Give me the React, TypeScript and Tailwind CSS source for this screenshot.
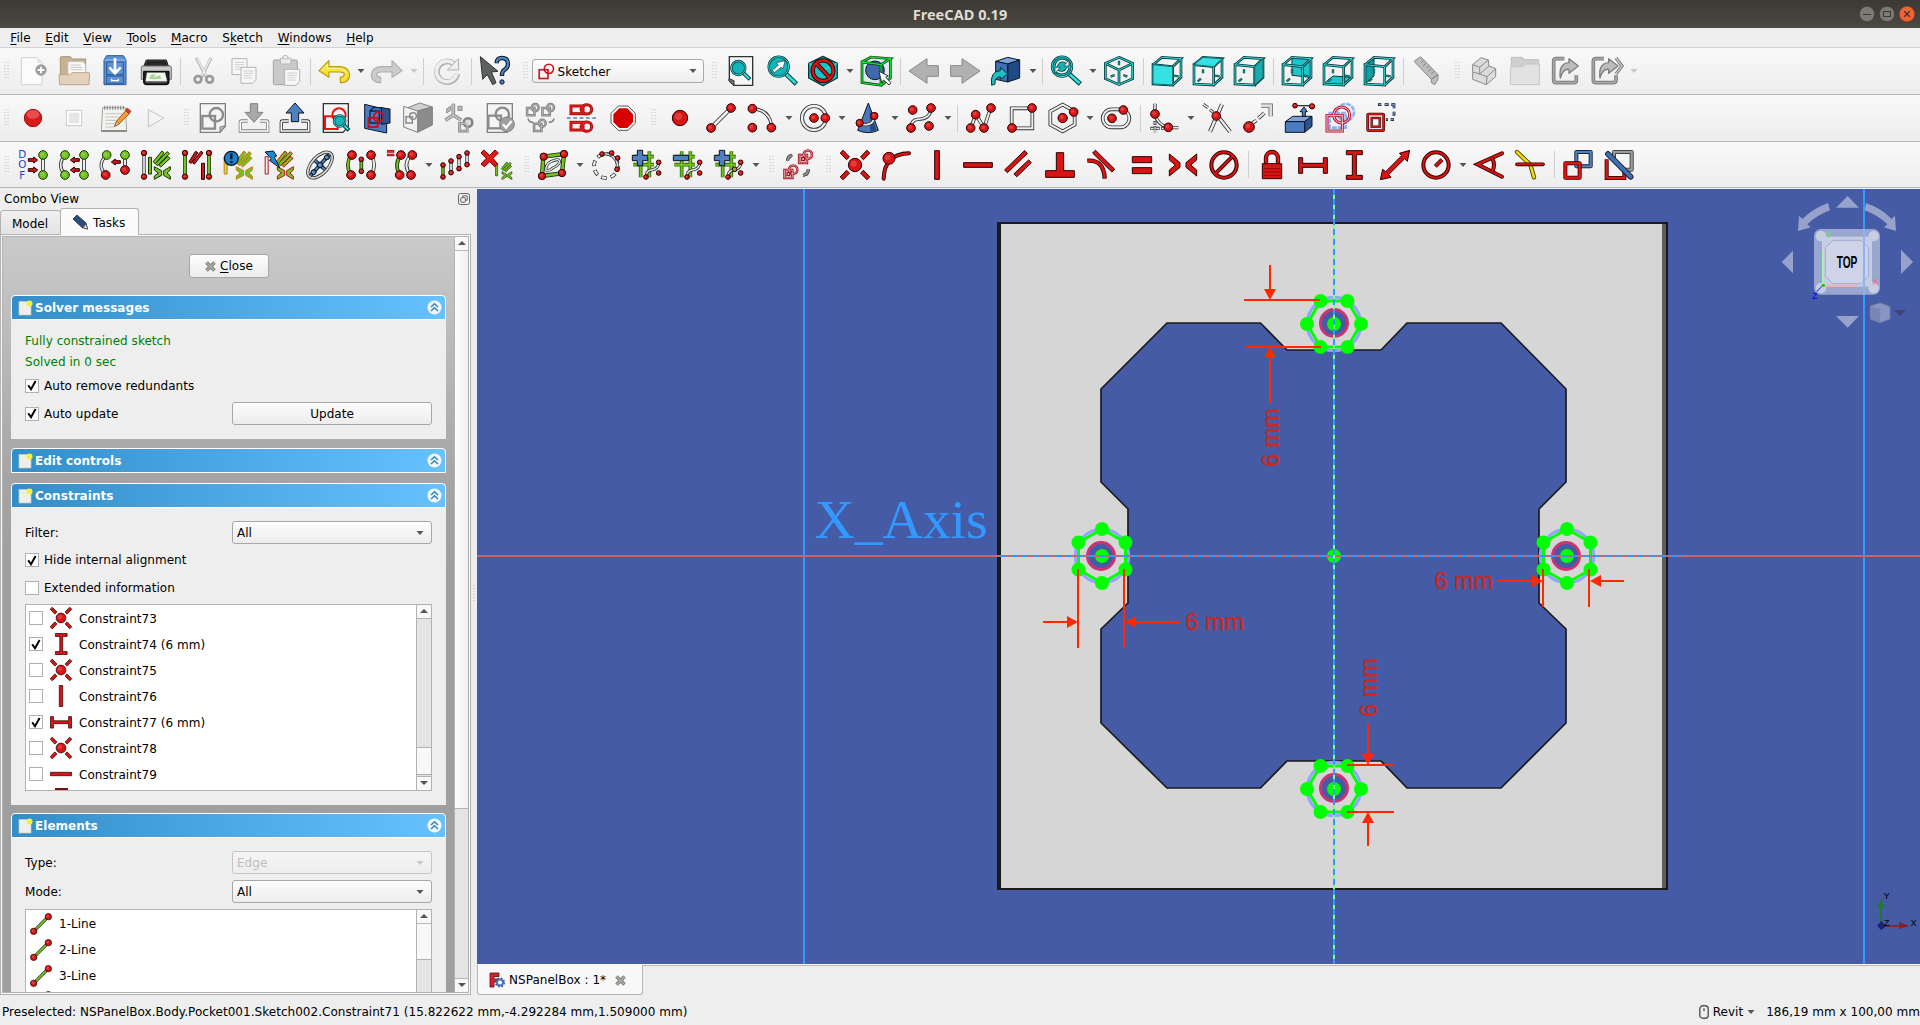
import React from "react";

type Kids = { children?: React.ReactNode };

const R = "#d91414";
const RD = "#2a0000";
const G = "#73c21e";
const GD = "#1b3305";
const W = "#eeeeec";
const K = "#2e3436";
const T = "#34dfe1";
const TD = "#06393b";
const B = "#4f80bf";
const BD = "#0b1521";
const GR = "#a9a9a9";
const GRD = "#808080";

/* ---------- icon primitives (90 x 90 grid) ---------- */

function Icon({ size = 30, children }: Kids & { size?: number }) {
  return (
    <svg width={size} height={size} viewBox="0 0 90 90" fill="none" className="shrink-0 overflow-visible">
      {children}
    </svg>
  );
}

function L({ d, w = 9, c = W, o = K, cap = "butt" }: { d: string; w?: number; c?: string; o?: string; cap?: "butt" | "round" | "square" }) {
  return (
    <>
      <path d={d} stroke={o} strokeWidth={w} strokeLinecap={cap} strokeLinejoin="miter" />
      <path d={d} stroke={c} strokeWidth={w - 5} strokeLinecap={cap} strokeLinejoin="miter" />
    </>
  );
}

/* closed bar with outlined ends */
function Bar({ x1, y1, x2, y2, w = 10, c = R, o = RD }: { x1: number; y1: number; x2: number; y2: number; w?: number; c?: string; o?: string }) {
  const n = Math.hypot(x2 - x1, y2 - y1);
  const px = (-(y2 - y1) / n) * (w / 2);
  const py = ((x2 - x1) / n) * (w / 2);
  return (
    <path
      d={`M${x1 + px} ${y1 + py}L${x2 + px} ${y2 + py}L${x2 - px} ${y2 - py}L${x1 - px} ${y1 - py}Z`}
      fill={c}
      stroke={o}
      strokeWidth={3}
    />
  );
}

function D({ x, y, r = 13, c = R, o = RD }: { x: number; y: number; r?: number; c?: string; o?: string }) {
  return (
    <>
      <circle cx={x} cy={y} r={r} fill={c} stroke={o} strokeWidth={3} />
      <circle cx={x - r * 0.2} cy={y - r * 0.2} r={r * 0.45} fill="#ffffff" opacity={0.18} />
    </>
  );
}

function P({ d, f = R, s = RD, w = 3 }: { d: string; f?: string; s?: string; w?: number }) {
  return <path d={d} fill={f} stroke={s} strokeWidth={w} strokeLinejoin="round" />;
}

/* square overlapped by a circle, the sketch emblem */
function Emblem({ x = 8, y = 10, s = 1, c = R, w = 6 }: { x?: number; y?: number; s?: number; c?: string; w?: number }) {
  return (
    <g transform={`translate(${x} ${y}) scale(${s})`} stroke={c} strokeWidth={w}>
      <rect x={2} y={26} width={38} height={38} />
      <circle cx={44} cy={22} r={20} />
    </g>
  );
}

/* ---------- file toolbar ---------- */

const IcNew = () => (
  <Icon>
    <P d="M10 5H58L72 20V86H10Z" f="#fbfbfb" s="#d2d2d2" />
    <path d="M58 5V20H72Z" fill="#e2e2e2" />
    <circle cx={69} cy={42} r={17} fill="#9d9d9d" />
    <path d="M69 32V52M59 42H79" stroke="#fff" strokeWidth={6} />
  </Icon>
);
const IcOpen = () => (
  <Icon>
    <P d="M4 80V6Q4 2 8 2H34L40 9H80V80Z" f="#c5b295" s="#a8936f" />
    <P d="M27 17H72L79 24V60H27Z" f="#fbfbfb" s="#c4c4c4" />
    <path d="M34 27H66M34 34H70M34 41H70" stroke="#c5c5c5" strokeWidth={3} />
    <P d="M2 86L0 56H32L40 50H90L92 54L90 86Z" f="#e4d1bb" s="#bda589" />
  </Icon>
);
const IcSave = () => (
  <Icon>
    <P d="M12 12L20 -1H70L78 12V86H12Z" f="#5b92d6" s="#2c5795" />
    <path d="M14 12H76" stroke="#8fb8e8" strokeWidth={4} />
    <rect x={20} y={18} width={50} height={38} stroke="#2c5795" strokeWidth={3} />
    <rect x={20} y={60} width={50} height={22} stroke="#2c5795" strokeWidth={3} />
    <path d="M35 68V74H55V68" stroke="#fff" strokeWidth={4} />
    <path d="M45 6V48M28 34L45 52L62 34" stroke="#fff" strokeWidth={8} />
  </Icon>
);
const IcPrint = () => (
  <Icon>
    <P d="M16 12H76L84 36V62H6V36Z" f="#454545" s="#1d1d1d" />
    <P d="M20 18H72L76 30H16Z" f="#2a2a2a" s="#111" />
    <P d="M1 34Q1 30 5 30H87Q91 30 91 34V70H1Z" f="#c9c9c9" s="#6e6e6e" />
    <P d="M8 46H84V78Q84 86 76 86H14Q8 86 8 78Z" f="#1f1f1f" s="#000" />
    <P d="M18 50H72L78 76H14Z" f="#f3f8ee" s="#ddd" w={1} />
    <path d="M30 56L44 54L38 64L56 58L62 68L40 70L24 68Z" fill="#aed49a" />
    <path d="M14 80H76" stroke="#5a5a5a" strokeWidth={3} />
  </Icon>
);
const IcCut = () => (
  <Icon>
    <path d="M22 6L54 66M66 6L36 66" stroke="#b5b5b5" strokeWidth={9} />
    <path d="M24 8L52 60M64 8L38 60" stroke="#f0f0f0" strokeWidth={4} />
    <circle cx={27} cy={70} r={10} stroke="#9a9a9a" strokeWidth={8} />
    <circle cx={62} cy={70} r={10} stroke="#9a9a9a" strokeWidth={8} />
  </Icon>
);
const Sheet = ({ x, y }: { x: number; y: number }) => (
  <g transform={`translate(${x} ${y})`}>
    <path d="M0 0H45V36L34 48H0Z" fill="#f7f7f7" stroke="#b5b5b5" strokeWidth={3} />
    <path d="M8 11H37M8 18H37M8 25H32M8 32H34" stroke="#cfcfcf" strokeWidth={3} />
  </g>
);
const IcCopy = () => (
  <Icon>
    <Sheet x={6} y={8} />
    <Sheet x={33} y={34} />
  </Icon>
);
const IcPaste = () => (
  <Icon>
    <rect x={7} y={12} width={72} height={74} rx={4} fill="#c9c9c9" stroke="#a3a3a3" strokeWidth={3} />
    <rect x={28} y={6} width={32} height={18} rx={3} fill="#ececec" stroke="#b5b5b5" strokeWidth={3} />
    <rect x={36} y={-1} width={14} height={10} rx={3} fill="#f3f3f3" stroke="#b5b5b5" strokeWidth={3} />
    <Sheet x={41} y={40} />
  </Icon>
);
const ArrowBack = ({ c, o }: { c: string; o: string }) => (
  <P d="M0 44L30 14V32H62Q92 34 92 58Q90 80 64 80V64Q76 62 76 54Q74 48 62 48H30V64Z" f={c} s={o} w={3.5} />
);
const IcUndo = () => (
  <Icon>
    <ArrowBack c="#f6e13c" o="#b99a08" />
    <path d="M8 42L26 24V38H62Q78 39 84 52" stroke="#fdf6b0" strokeWidth={3} />
  </Icon>
);
const IcRedo = () => (
  <Icon>
    <g transform="translate(90 0) scale(-1 1)">
      <ArrowBack c="#cccccc" o="#b0b0b0" />
    </g>
  </Icon>
);
const IcRefresh = () => (
  <Icon>
    <path d="M76 54A31 31 0 1 1 66 24" stroke="#b0b0b0" strokeWidth={17} />
    <path d="M74 55A31 31 0 1 1 66 24" stroke="#eeeeee" strokeWidth={11} />
    <P d="M80 8V42H46L58 30Q68 18 80 8Z" f="#eeeeee" s="#b0b0b0" />
  </Icon>
);
const IcWhat = () => (
  <Icon>
    <P d="M1 2L54 46L34 48L48 80L38 86L22 56L8 70Z" f="#5e625f" s="#2f3231" />
    <path d="M50 22Q50 6 66 6Q84 6 84 24Q84 36 70 44Q66 48 66 60" stroke={BD} strokeWidth={13} />
    <path d="M50 20Q51 6 66 6Q84 6 84 24Q84 36 70 44Q66 48 66 58" stroke={B} strokeWidth={7} />
    <circle cx={66} cy={78} r={6.5} fill={B} stroke={BD} strokeWidth={3} />
  </Icon>
);

/* ---------- view toolbar ---------- */

const Lens = ({ x = 36, y = 34, r = 28, hx = 88, hy = 84, w = 14 }: { x?: number; y?: number; r?: number; hx?: number; hy?: number; w?: number }) => (
  <>
    <path d={`M${x + r * 0.7} ${y + r * 0.7}L${hx} ${hy}`} stroke={TD} strokeWidth={w} />
    <path d={`M${x + r * 0.7} ${y + r * 0.7}L${hx - 2} ${hy - 2}`} stroke={T} strokeWidth={w - 6} />
    <circle cx={x} cy={y} r={r} fill="#12b5b9" stroke={TD} strokeWidth={7} />
    <circle cx={x} cy={y} r={r} stroke={T} strokeWidth={3} />
  </>
);
const IcFit = () => (
  <Icon>
    <path d="M10 2H80V88H24L10 74Z" fill="#f6f6f4" stroke={K} strokeWidth={4} />
    <P d="M9 68L24 74V90L9 74Z" f="#6d706c" s={K} />
    <Lens x={37} y={36} r={21} hx={72} hy={70} w={12} />
  </Icon>
);
const IcFitSel = () => (
  <Icon>
    <Lens x={35} y={32} r={30} />
    <P d="M22 50L16 42L34 28L28 20L54 14L48 38L42 34Z" f="#fff" s={K} w={2} />
  </Icon>
);
const IcStyle = () => (
  <Icon>
    <P d="M45 1L88 22V66L45 89L2 66V22Z" f="#14c3c6" s={TD} w={4} />
    <path d="M2 22L45 42L88 22" stroke={T} strokeWidth={3} />
    <circle cx={45} cy={44} r={31} stroke={RD} strokeWidth={13} />
    <path d="M24 22L66 66" stroke={RD} strokeWidth={13} />
    <circle cx={45} cy={44} r={31} stroke={R} strokeWidth={7} />
    <path d="M23 21L67 67" stroke={R} strokeWidth={7} />
  </Icon>
);
const IcBBox = () => (
  <Icon>
    <path d="M3 20L30 3H86V60L62 86L4 82Z" fill="#c8d3e6" opacity={0.4} />
    <circle cx={42} cy={43} r={28} fill="#4069ad" stroke={BD} strokeWidth={3} />
    <path d="M3 18L60 26V88L3 80ZM3 18L30 3L88 8L60 26M88 8V66L60 88" stroke="#04300a" strokeWidth={8} />
    <path d="M3 18L60 26V88L3 80ZM3 18L30 3L88 8L60 26M88 8V66L60 88" stroke="#10e22c" strokeWidth={4} />
    <P d="M54 46L82 60L74 64L90 80L84 87L68 72L62 80Z" f="#fff" s={K} />
  </Icon>
);
const IcBack = () => (
  <Icon>
    <P d="M0 45L54 8V29H88V61H54V82Z" f="#b1b1b1" s="#888" />
  </Icon>
);
const IcFwd = () => (
  <Icon>
    <P d="M90 45L36 8V29H2V61H36V82Z" f="#b1b1b1" s="#888" />
  </Icon>
);
const IcLink = () => (
  <Icon>
    <P d="M14 16L50 4L86 12L50 24Z" f="#7ba3da" s={BD} />
    <P d="M50 24L86 12V66L50 78Z" f="#214a85" s={BD} />
    <P d="M14 16L50 24V78L14 70Z" f="#3f6fb4" s={BD} />
    <P d="M2 88Q-4 46 28 44V34L50 54L28 70V62Q10 64 12 84Z" f="#1fc1c4" s={TD} />
  </Icon>
);
const IcSync = () => (
  <Icon>
    <Lens x={33} y={32} r={30} />
    <path d="M16 30Q20 14 34 14Q44 14 50 22M50 36Q46 50 32 50Q22 50 16 42" stroke={TD} strokeWidth={10} />
    <path d="M16 30Q20 14 34 14Q44 14 50 22M50 36Q46 50 32 50Q22 50 16 42" stroke={W} strokeWidth={5} />
    <P d="M54 12V30H38ZM12 52V34H28Z" f={W} s={TD} w={2} />
  </Icon>
);
const IcIso = () => (
  <Icon>
    <L d="M45 4L86 22V68L45 86L4 68V22ZM4 22L45 42L86 22M45 42V86" c={T} o={TD} w={8} />
    <L d="M45 14V28M20 62L32 57M70 62L58 57" c={T} o={TD} w={7} />
  </Icon>
);
type Face = "front" | "top" | "right" | "rear" | "bottom" | "left";
const facePath: Record<Face, string> = {
  front: "M3 26L62 32V87L3 84Z",
  top: "M3 26L30 4L87 8L62 32Z",
  right: "M62 32L87 8V64L62 87Z",
  rear: "M30 4L87 8V64L30 58Z",
  bottom: "M3 84L30 60L87 64L62 87Z",
  left: "M3 26L30 4V60L3 84Z",
};
const IcCube = ({ face }: { face: Face }) => (
  <Icon>
    {(face === "rear" || face === "bottom" || face === "left") && <path d={facePath[face]} fill={face === "left" ? "#0f9ea1" : "#1fc5c8"} stroke={TD} strokeWidth={3} />}
    <L d="M14 76L24 68M30 40V52M66 59L80 61" c={T} o={TD} w={7} />
    <L d="M3 26L62 32V87L3 84ZM3 26L30 4L87 8L62 32M87 8V64L62 87" c={T} o={TD} w={8} />
    {(face === "front" || face === "top" || face === "right") && <path d={facePath[face]} fill={face === "right" ? "#1aadb0" : "#34e0e2"} stroke={TD} strokeWidth={2} />}
  </Icon>
);
const IcRuler = () => (
  <Icon>
    <P d="M6 16L26 2L78 56V70L68 86L58 80L58 70Z" f="#bdbdbd" s="#8a8a8a" />
    <path d="M58 70L78 56M34 14L28 20M42 22L33 30M50 30L44 36M58 38L49 46M66 46L58 54" stroke="#777" strokeWidth={3} />
  </Icon>
);
const IcPart = () => (
  <Icon>
    <P d="M11 26L36 5L58 12L60 30L80 38V62L52 86L11 70Z" f="#dcdcdc" s="#8b8b8b" />
    <path d="M11 26L32 34L58 12M32 34V54L60 30M32 54L11 48M32 54L54 62L80 38M54 62L52 86" stroke="#8b8b8b" strokeWidth={3} />
  </Icon>
);
const IcFolder = () => (
  <Icon>
    <P d="M4 84V4H36L44 11H86V84Z" f="#cfcfcf" s="#bdbdbd" />
    <P d="M1 86V32H38L46 24H88V86Z" f="#e2e2e2" s="#c6c6c6" />
  </Icon>
);
const ExportBody = () => (
  <>
    <path d="M40 8H16Q8 8 8 16V72Q8 80 16 80H68Q76 80 76 72V58" stroke="#7e7e7e" strokeWidth={11} />
    <path d="M40 8H16Q8 8 8 16V72Q8 80 16 80H68Q76 80 76 72V58" stroke="#a8a8a8" strokeWidth={5} />
    <P d="M28 66Q22 22 54 20V8L82 30L54 52V40Q36 38 28 66Z" f="#bcbcbc" s="#7e7e7e" w={4} />
  </>
);
const IcExport = () => (
  <Icon>
    <ExportBody />
  </Icon>
);
const IcExportAll = () => (
  <Icon>
    <g transform="translate(-4 0)">
      <ExportBody />
    </g>
    <path d="M72 6L90 30L72 54" stroke="#7e7e7e" strokeWidth={10} />
    <path d="M72 6L90 30L72 54" stroke="#c4c4c4" strokeWidth={4} />
  </Icon>
);

/* ---------- macro and sketch toolbar ---------- */

const IcRecord = () => (
  <Icon>
    <circle cx={45} cy={45} r={26} fill="#d81b1b" stroke="#9c0f0f" strokeWidth={3} />
    <ellipse cx={45} cy={34} rx={19} ry={13} fill="#ff8a8a" opacity={0.45} />
  </Icon>
);
const IcStopSq = () => (
  <Icon>
    <rect x={22} y={22} width={46} height={46} fill="#fff" stroke="#c9c9c9" strokeWidth={3} />
    <rect x={29} y={29} width={32} height={32} fill="#e6e6e6" />
  </Icon>
);
const IcNote = () => (
  <Icon>
    <P d="M8 14H76L80 84H4Z" f="#f2f2ef" s="#a5a5a0" />
    <path d="M4 84H80" stroke="#6d6d68" strokeWidth={4} />
    <path d="M14 8V20M22 8V20M30 8V20M38 8V20M46 8V20M54 8V20M62 8V20M70 8V20" stroke="#8a8a8a" strokeWidth={3.5} />
    <path d="M16 32H66M16 42H58M16 52H52M16 62H46M16 72H42" stroke="#c4c4c4" strokeWidth={3} />
    <P d="M44 70L50 54L78 22L88 32L58 62Z" f="#f39c3d" s="#a85c10" />
    <P d="M76 22L82 15L93 25L87 32Z" f="#dc3a2b" s="#96190f" w={2} />
    <P d="M44 70L50 55L58 63Z" f="#e9cfa6" s="#6e4a1a" w={2} />
  </Icon>
);
const IcPlay = () => (
  <Icon>
    <P d="M22 20L68 45L22 72Z" f="#f4f4f4" s="#c3c3c3" />
  </Icon>
);
const Page = ({ c = GRD }: { c?: string }) => <path d="M7 2H82V70L66 88H7Z" fill="#f4f4f4" stroke={c} strokeWidth={4} />;
const IcNewSk = () => (
  <Icon>
    <Page />
    <Emblem x={11} y={13} c="#8b8b8b" w={7} />
    <P d="M82 68L66 72V88Z" f="#bbb" s={GRD} />
  </Icon>
);
const Tray = ({ c }: { c: string }) => (
  <>
    <path d="M26 54H8Q4 54 4 58V84H86V58Q86 54 82 54H64" stroke={c} strokeWidth={10} />
    <path d="M26 54H8Q4 54 4 58V84H86V58Q86 54 82 54H64" stroke="#fff" strokeWidth={5} />
  </>
);
const IcLeave = () => (
  <Icon>
    <Tray c={GRD} />
    <P d="M34 2H56V28H72L45 58L18 28H34Z" f={GR} s={GRD} />
  </Icon>
);
const IcUp = () => (
  <Icon>
    <Tray c={K} />
    <P d="M34 56H56V30H72L45 0L18 30H34Z" f={B} s={BD} />
  </Icon>
);
const IcViewSk = () => (
  <Icon>
    <Page c={K} />
    <Emblem x={10} y={14} c="#ee1111" w={6} />
    <Lens x={56} y={54} r={17} hx={84} hy={82} w={12} />
  </Icon>
);
const IcSection = () => (
  <Icon>
    <P d="M8 4L74 20V90L8 76Z" f="#4b7cc0" s={BD} />
    <P d="M58 14L84 18V60L58 64Z" f="#2b538f" s={BD} />
    <path d="M24 24H52V60H24ZM24 24L34 14H62" stroke="#0e2445" strokeWidth={4} />
    <Emblem x={18} y={26} s={0.72} c="#c90f1c" w={8} />
  </Icon>
);
const IcMap = () => (
  <Icon>
    <P d="M4 18L50 0L88 12L44 24Z" f="#d0d0d0" s={GRD} />
    <P d="M44 24L88 12V66L44 88Z" f="#8c8c8c" s={GRD} />
    <P d="M2 10L44 24V88L2 72Z" f="#f1f1f1" s={GRD} />
    <Emblem x={8} y={28} s={0.5} c="#8b8b8b" w={9} />
  </Icon>
);
const IcReorient = () => (
  <Icon>
    <L d="M28 2V36L4 52M28 36L52 52" w={11} c="#c0c0c0" o="#858585" />
    <rect x={42} y={10} width={12} height={12} fill="#bdbdbd" stroke="#8d8d8d" strokeWidth={3} />
    <path d="M8 18L20 10V22L8 30Z" fill="#bdbdbd" stroke="#8d8d8d" strokeWidth={3} />
    <g transform="translate(44 42) scale(0.64)">
      <path d="M4 30H40V66H4Z" stroke="#858585" strokeWidth={13} />
      <circle cx={44} cy={26} r={20} fill="#dcdcdc" stroke="#858585" strokeWidth={12} />
      <path d="M4 30H40V66H4Z" stroke="#c0c0c0" strokeWidth={5} />
    </g>
  </Icon>
);
const IcValidate = () => (
  <Icon>
    <Page />
    <Emblem x={8} y={12} c="#8b8b8b" w={7} />
    <circle cx={66} cy={64} r={22} fill="#a0a0a0" stroke={GRD} strokeWidth={3} />
    <path d="M54 64L63 74L80 54" stroke="#fff" strokeWidth={7} />
  </Icon>
);
const MiniEmblem = ({ x, y }: { x: number; y: number }) => (
  <g transform={`translate(${x} ${y}) scale(0.58)`}>
    <g stroke="#808080" strokeWidth={13}>
      <path d="M4 24H42V62H4Z" />
      <circle cx={46} cy={22} r={18} />
    </g>
    <g stroke="#b8b8b8" strokeWidth={4}>
      <path d="M4 24H42V62H4Z" />
      <circle cx={46} cy={22} r={18} />
    </g>
  </g>
);
const IcMerge = () => (
  <Icon>
    <MiniEmblem x={1} y={1} />
    <MiniEmblem x={47} y={1} />
    <MiniEmblem x={22} y={48} />
    <path d="M6 46Q8 58 22 58M84 46Q82 58 68 58" stroke="#8a8a8a" strokeWidth={5} />
  </Icon>
);
const IcMirror = () => (
  <Icon>
    {["translate(0 0)", "translate(0 90) scale(1 -1)"].map((t) => (
      <g key={t} transform={t}>
        <g stroke="#a50808" strokeWidth={9}>
          <rect x={12} y={9} width={36} height={23} />
          <path d="M60 5A14 14 0 0 1 60 33Q46 33 42 19Q46 5 60 5Z" />
        </g>
        <g stroke="#ea1c1c" strokeWidth={4}>
          <rect x={12} y={9} width={36} height={23} />
          <path d="M60 5A14 14 0 0 1 60 33Q46 33 42 19Q46 5 60 5Z" />
        </g>
      </g>
    ))}
    <path d="M0 45H90" stroke={B} strokeWidth={5} strokeDasharray="11 8" />
  </Icon>
);
const IcStop = () => (
  <Icon>
    <P d="M31 9H60L82 31V60L60 82H31L9 60V31Z" f="#fdfdfd" s="#555" w={3} />
    <path d="M34 16H58L75 34V58L58 75H34L16 58V34Z" fill="#d60000" />
  </Icon>
);

const IcPoint = () => (
  <Icon>
    <D x={45} y={45} r={23} />
  </Icon>
);
const IcLine = ({ c = W, size = 30 }: { c?: string; size?: number }) => (
  <Icon size={size}>
    <L d="M15 75L75 15" w={13} c={c} />
    <D x={15} y={75} />
    <D x={75} y={15} />
  </Icon>
);
const IcArc = () => (
  <Icon>
    <L d="M18 18Q68 20 74 70" w={10} />
    <D x={16} y={17} />
    <D x={16} y={74} />
    <D x={73} y={74} />
  </Icon>
);
const IcCircle = () => (
  <Icon>
    <circle cx={42} cy={45} r={36} stroke={K} strokeWidth={12} />
    <circle cx={42} cy={45} r={36} stroke={W} strokeWidth={7} />
    <D x={42} y={45} />
    <D x={76} y={45} />
  </Icon>
);
const IcConic = () => (
  <Icon>
    <P d="M46 0L76 82Q46 96 14 82Z" f="#4878ba" s={BD} />
    <path d="M50 20L70 80Q60 86 52 86Z" fill="#274b83" />
    <L d="M20 62Q60 74 64 40" w={10} />
    <D x={20} y={60} r={11} />
    <D x={64} y={39} r={11} />
  </Icon>
);
const IcSpline = () => (
  <Icon>
    <L d="M15 75Q14 52 34 49Q74 48 75 16" w={10} />
    <D x={20} y={21} />
    <D x={75} y={15} />
    <D x={15} y={75} />
    <D x={69} y={69} />
  </Icon>
);
const IcPoly = () => (
  <Icon>
    <L d="M14 75L30 35L54 75L74 15" w={11} />
    <D x={14} y={75} />
    <D x={29} y={35} />
    <D x={54} y={75} />
    <D x={75} y={15} />
  </Icon>
);
const IcRect = () => (
  <Icon>
    <L d="M14 16H76V76H14Z" w={11} />
    <D x={75} y={15} />
    <D x={15} y={75} />
  </Icon>
);
const IcHex = () => (
  <Icon>
    <L d="M44 5L80 25V65L44 85L7 65V25Z" w={11} />
    <D x={44} y={45} r={14} />
    <D x={77} y={27} />
  </Icon>
);
const IcSlot = () => (
  <Icon>
    <rect x={5} y={19} width={80} height={54} rx={27} stroke={K} strokeWidth={11} />
    <rect x={5} y={19} width={80} height={54} rx={27} stroke={W} strokeWidth={6} />
    <D x={33} y={46} />
    <D x={67} y={21} />
  </Icon>
);
const IcFillet = () => (
  <Icon>
    <L d="M18 2V32Q24 66 60 74H88" w={10} />
    <path d="M18 54V88M4 76H44" stroke={K} strokeWidth={9} strokeDasharray="12 4" />
    <path d="M18 56V88M6 76H44" stroke={W} strokeWidth={4} strokeDasharray="8 8" />
    <D x={18} y={33} />
    <D x={58} y={73} />
  </Icon>
);
const IcTrim = () => (
  <Icon>
    <L d="M60 4L24 86" w={12} />
    <L d="M48 40L84 86" w={12} />
    <L d="M4 4L18 14M24 20L34 28" w={9} />
    <D x={43} y={39} />
  </Icon>
);
const IcExtend = () => (
  <Icon>
    <L d="M22 66L40 52M46 46L64 30" w={11} />
    <L d="M54 8H83V40" w={13} c="#dcdcdc" o="#666" />
    <D x={18} y={72} r={16} />
  </Icon>
);
const IcExternal = () => (
  <Icon>
    <P d="M4 56L26 40H84L62 56Z" f="#7ba3da" s={BD} />
    <P d="M62 56L84 40V70L62 88Z" f="#2b538f" s={BD} />
    <P d="M4 56H62V88H4Z" f="#4b7cc0" s={BD} />
    <path d="M34 8H84" stroke={K} strokeWidth={4} />
    <P d="M55 40V26H48L60 12L70 26H64V40Z" f={B} s={BD} />
    <D x={33} y={8} r={7} />
    <D x={84} y={10} r={8} />
  </Icon>
);
const IcCarbon = () => (
  <Icon>
    <g stroke="#7fa6f2" strokeWidth={8} opacity={0.85}>
      <rect x={14} y={30} width={48} height={44} strokeDasharray="14 3" />
      <circle cx={62} cy={28} r={25} strokeDasharray="14 3" />
    </g>
    <g stroke="#b8152a" strokeWidth={9}>
      <rect x={6} y={38} width={46} height={46} />
      <circle cx={50} cy={36} r={24} />
    </g>
    <g stroke="#f3d3dc" strokeWidth={3}>
      <rect x={6} y={38} width={46} height={46} />
      <circle cx={50} cy={36} r={24} />
    </g>
  </Icon>
);
const IcConstr = () => (
  <Icon>
    <path d="M36 5H46M56 5H68M76 5H84V16M84 26V38M84 50H74M66 50H60" stroke={BD} strokeWidth={8} />
    <path d="M38 5H45M57 5H67M77 5H84V15M84 27V37M83 50H75M65 50H61" stroke="#6d9bd6" strokeWidth={4} />
    <rect x={5} y={33} width={48} height={50} rx={3} fill="#f4e4e2" stroke={RD} strokeWidth={8} />
    <rect x={5} y={33} width={48} height={50} rx={3} stroke="#ee1515" strokeWidth={5} />
    <rect x={17} y={45} width={24} height={26} fill="#fff" stroke={RD} strokeWidth={7} />
    <rect x={17} y={45} width={24} height={26} stroke="#ee1515" strokeWidth={4} />
  </Icon>
);

/* ---------- sketch helper toolbar ---------- */

const ArrL = ({ x, y }: { x: number; y: number }) => <P d={`M${x} ${y}L${x + 12} ${y - 9}V${y - 4}H${x + 27}V${y + 4}H${x + 12}V${y + 9}Z`} />;
const ArrR = ({ x, y }: { x: number; y: number }) => <P d={`M${x + 28} ${y}L${x + 16} ${y - 9}V${y - 4}H${x}V${y + 4}H${x + 16}V${y + 9}Z`} />;
const IcDof = () => (
  <Icon>
    <g fill="#2c3fb8" fontFamily="DejaVu Sans" fontSize={31}>
      <text x={1} y={24}>D</text>
      <text x={1} y={55}>O</text>
      <text x={4} y={88}>F</text>
    </g>
    <L d="M75 25V65" w={12} />
    <D x={75} y={15} c={G} o={GD} />
    <D x={75} y={75} c={G} o={GD} />
    <ArrR x={31} y={30} />
    <ArrR x={31} y={60} />
  </Icon>
);
const IcConn = () => (
  <Icon>
    <L d="M18 15Q-8 45 18 75" w={10} />
    <L d="M75 25V65" w={12} />
    <D x={18} y={15} c={G} o={GD} />
    <D x={75} y={15} c={G} o={GD} />
    <D x={18} y={75} c={G} o={GD} />
    <D x={75} y={75} c={G} o={GD} />
    <ArrL x={34} y={30} />
    <ArrL x={34} y={60} />
  </Icon>
);
const IcOrig = () => (
  <Icon>
    <L d="M20 15Q-12 45 18 75" w={10} />
    <L d="M75 20V55" w={12} />
    <D x={20} y={15} c={G} o={GD} />
    <D x={75} y={15} c={G} o={GD} />
    <D x={75} y={60} />
    <D x={17} y={75} />
    <ArrL x={34} y={36} />
  </Icon>
);
const Hatch = ({ c, o }: { c: string; o: string }) => (
  <>
    <Bar x1={40} y1={38} x2={66} y2={6} w={9} c={c} o={o} />
    <Bar x1={46} y1={44} x2={82} y2={8} w={9} c={c} o={o} />
    <Bar x1={56} y1={48} x2={84} y2={22} w={9} c={c} o={o} />
  </>
);
const Chev = ({ c, o }: { c: string; o: string }) => (
  <>
    <P d="M40 50L62 62V76L40 88V78L52 69L40 60Z" f={c} s={o} />
    <P d="M88 50L68 62V76L88 88V78L78 69L88 60Z" f={c} s={o} />
  </>
);
const IcSelCon = () => (
  <Icon>
    <L d="M9 10V80" w={10} />
    <Bar x1={27} y1={22} x2={27} y2={72} w={9} c={G} o={GD} />
    <Hatch c={G} o={GD} />
    <Chev c={G} o={GD} />
    <D x={9} y={9} r={8} />
    <D x={9} y={80} r={8} />
  </Icon>
);
const IcSelElem = () => (
  <Icon>
    <L d="M9 10V80" w={11} c={G} o={GD} />
    <L d="M81 10V80" w={11} c={G} o={GD} />
    <Bar x1={24} y1={38} x2={44} y2={6} w={8} />
    <Bar x1={34} y1={40} x2={60} y2={6} w={8} />
    <Bar x1={63} y1={40} x2={63} y2={88} w={9} />
    <D x={9} y={9} r={8} />
    <D x={9} y={80} r={8} />
    <D x={81} y={9} r={8} />
    <D x={81} y={80} r={8} />
  </Icon>
);
const IcRedund = () => (
  <Icon>
    <Bar x1={8} y1={20} x2={8} y2={72} w={9} c="#c8d94a" o="#d2791a" />
    <Hatch c={G} o="#d2791a" />
    <Chev c={G} o="#d2791a" />
    <circle cx={25} cy={25} r={21} fill="#1d7fd0" stroke={BD} strokeWidth={4} />
    <path d="M25 10V28M25 33V40" stroke={BD} strokeWidth={7} />
  </Icon>
);
const IcConflict = () => (
  <Icon>
    <Bar x1={8} y1={20} x2={8} y2={72} w={9} c={W} o="#b01717" />
    <Hatch c={G} o="#b01717" />
    <Chev c={G} o="#b01717" />
    <P d="M3 6L28 3L38 18L31 22L48 54L16 31L22 26Z" f="#1d87da" s={BD} />
  </Icon>
);
const IcInternal = () => (
  <Icon>
    <g transform="rotate(-48 45 45)">
      <ellipse cx={45} cy={45} rx={47} ry={25} stroke={K} strokeWidth={10} />
      <ellipse cx={45} cy={45} rx={47} ry={25} stroke="#d8d8d4" strokeWidth={5} />
      <L d="M2 45H88M45 24V66" c={B} o={BD} w={11} />
      <D x={16} y={45} r={7} c={B} o={BD} />
      <D x={45} y={45} r={8} c={B} o={BD} />
      <D x={76} y={45} r={7} c={B} o={BD} />
    </g>
  </Icon>
);
const IcSymm = () => (
  <Icon>
    <L d="M15 15Q-4 45 15 75" w={11} c={G} o={GD} />
    <L d="M75 15Q94 45 75 75" w={11} />
    <L d="M46 30V62" w={11} c={G} o={GD} />
    <D x={18} y={15} />
    <D x={75} y={15} />
    <D x={15} y={75} />
    <D x={75} y={75} />
    <D x={46} y={28} r={7} />
    <D x={46} y={64} r={7} />
  </Icon>
);
const IcClone = () => (
  <Icon>
    <path d="M0 4H22M0 15H22" stroke="#9d0b0b" strokeWidth={8} />
    <path d="M2 4H20M2 15H20" stroke="#ef3a3a" strokeWidth={3} />
    <L d="M42 15Q20 42 38 75" w={11} c={G} o={GD} />
    <L d="M72 15Q46 44 70 75" w={11} />
    <D x={42} y={15} />
    <D x={76} y={15} />
    <D x={38} y={75} />
    <D x={72} y={75} />
  </Icon>
);
const IcArray = () => (
  <Icon>
    <L d="M9 45V80" w={10} c={G} o={GD} />
    <L d="M33 34V68" w={10} />
    <L d="M57 20V56" w={10} />
    <L d="M81 10V42" w={10} />
    <D x={9} y={45} r={7} />
    <D x={9} y={81} r={7} />
    <D x={33} y={33} r={7} />
    <D x={33} y={68} r={7} />
    <D x={57} y={20} r={7} />
    <D x={57} y={56} r={7} />
    <D x={81} y={9} r={7} />
    <D x={81} y={44} r={7} />
  </Icon>
);
const IcDelAll = () => (
  <Icon>
    <g transform="translate(38 34) scale(0.62)">
      <Bar x1={14} y1={12} x2={14} y2={70} w={10} c={G} o={GD} />
      <Hatch c={G} o={GD} />
      <Chev c={G} o={GD} />
    </g>
    <P d="M8 0L26 16L42 0L52 9L36 25L50 42L41 50L26 35L10 50L0 42L16 25L0 9Z" f="#e01b1b" s="#7a0000" />
  </Icon>
);
const IcBsCtl = () => (
  <Icon>
    <L d="M16 20L78 12L72 70L12 78Z" w={13} c={G} o={GD} />
    <L d="M24 62Q20 46 40 34Q64 24 64 34Q66 44 44 54Q34 64 24 62" w={9} />
    <D x={17} y={20} r={11} />
    <D x={78} y={12} r={11} />
    <D x={12} y={78} r={11} />
    <D x={72} y={69} r={11} />
  </Icon>
);
const IcBsDeg = () => (
  <Icon>
    <ellipse cx={45} cy={48} rx={36} ry={36} stroke={K} strokeWidth={11} strokeDasharray="17 12" strokeDashoffset={4} />
    <ellipse cx={45} cy={48} rx={36} ry={36} stroke="#fff" strokeWidth={6} strokeDasharray="13 16" strokeDashoffset={2} />
    <L d="M34 13Q60 6 76 32Q82 44 76 58" w={9} />
    <D x={33} y={12} r={7} />
    <D x={62} y={9} r={7} />
    <D x={80} y={24} r={7} />
    <D x={78} y={58} r={7} />
  </Icon>
);
const IcGrid = ({ sign, knot }: { sign: "+" | "-"; knot?: boolean }) => (
  <Icon>
    <L d="M26 4V82M52 4V82M4 20H66M4 44H66" w={11} c={G} o="#2f6608" />
    <L d="M42 80Q42 62 58 60Q80 56 80 38" w={9} />
    <D x={42} y={81} r={7} />
    <D x={80} y={37} r={7} />
    <D x={80} y={69} r={7} />
    {knot && <D x={62} y={58} r={7} c="#9b9a12" />}
    {sign === "+" ? <P d="M16 1H32V16H47V32H32V47H16V32H1V16H16Z" f={B} s={BD} /> : <P d="M1 16H47V32H1Z" f={B} s={BD} />}
  </Icon>
);
const SpaceEmblem = ({ x, y }: { x: number; y: number }) => (
  <g transform={`translate(${x} ${y}) scale(0.62)`}>
    <g stroke="#a80d1a" strokeWidth={12}>
      <path d="M4 26H42V64H4Z" />
      <circle cx={46} cy={24} r={20} />
    </g>
    <g stroke="#f6e4e6" strokeWidth={3}>
      <path d="M4 26H42V64H4Z" />
      <circle cx={46} cy={24} r={20} />
    </g>
    <path d="M16 38H30V52H16Z" stroke="#a80d1a" strokeWidth={6} />
  </g>
);
const IcVirt = () => (
  <Icon>
    <SpaceEmblem x={46} y={-1} />
    <SpaceEmblem x={2} y={44} />
    <L d="M14 32Q14 18 28 16" w={10} c="#999" o="#333" />
    <L d="M76 58Q76 74 60 76" w={10} c="#999" o="#333" />
  </Icon>
);

/* ---------- constraints ---------- */

const IcCoin = ({ size = 30 }: { size?: number }) => (
  <Icon size={size}>
    <Bar x1={5} y1={5} x2={24} y2={25} w={12} />
    <Bar x1={85} y1={5} x2={66} y2={25} w={12} />
    <Bar x1={5} y1={85} x2={24} y2={65} w={12} />
    <Bar x1={85} y1={85} x2={66} y2={65} w={12} />
    <D x={45} y={45} r={20} />
  </Icon>
);
const IcOnObj = () => (
  <Icon>
    <L d="M8 86Q10 12 84 10" w={12} c={R} o={RD} cap="round" />
    <D x={24} y={25} r={18} />
  </Icon>
);
const IcVert = ({ size = 30 }: { size?: number }) => (
  <Icon size={size}>
    <Bar x1={45} y1={2} x2={45} y2={88} w={14} />
  </Icon>
);
const IcHorz = ({ size = 30 }: { size?: number }) => (
  <Icon size={size}>
    <Bar x1={2} y1={45} x2={88} y2={45} w={14} />
  </Icon>
);
const IcPar = () => (
  <Icon>
    <Bar x1={6} y1={64} x2={66} y2={6} w={12} />
    <Bar x1={34} y1={76} x2={78} y2={34} w={12} />
  </Icon>
);
const IcPerp = () => (
  <Icon>
    <P d="M34 8H56V62H88V82H2V62H34Z" />
  </Icon>
);
const IcTan = () => (
  <Icon>
    <Bar x1={24} y1={5} x2={82} y2={62} w={12} />
    <L d="M4 32Q54 28 56 86" w={13} c={R} o={RD} />
  </Icon>
);
const IcEq = () => (
  <Icon>
    <Bar x1={16} y1={29} x2={74} y2={29} w={18} />
    <Bar x1={16} y1={62} x2={74} y2={62} w={18} />
  </Icon>
);
const IcSym = () => (
  <Icon>
    <P d="M4 12L36 38V52L4 78V60L22 45L4 30Z" />
    <P d="M86 12L54 38V52L86 78V60L68 45L86 30Z" />
  </Icon>
);
const IcBlock = () => (
  <Icon>
    <circle cx={45} cy={45} r={38} stroke={RD} strokeWidth={12} />
    <path d="M20 70L70 20" stroke={RD} strokeWidth={12} />
    <circle cx={45} cy={45} r={38} stroke={R} strokeWidth={6} />
    <path d="M18 72L72 18" stroke={R} strokeWidth={6} />
  </Icon>
);
const IcLock = () => (
  <Icon>
    <L d="M27 44V24A18 18 0 0 1 63 24V44" w={13} c={R} o={RD} />
    <P d="M16 41H74V86H16Z" />
    <path d="M20 56H70M20 66H70M20 76H70" stroke="#8f0808" strokeWidth={3} />
  </Icon>
);
const IcHDist = ({ size = 30 }: { size?: number }) => (
  <Icon size={size}>
    <P d="M2 23H14V40H76V23H88V70H76V52H14V70H2Z" />
  </Icon>
);
const IcVDist = ({ size = 30 }: { size?: number }) => (
  <Icon size={size}>
    <P d="M22 2H70V14H52V76H70V88H22V76H40V14H22Z" />
  </Icon>
);
const IcDist = () => (
  <Icon>
    <P d="M1 89L8 58L17 65L65 17L58 10L89 1L82 34L74 26L26 74L33 82Z" />
  </Icon>
);
const IcRad = () => (
  <Icon>
    <circle cx={45} cy={45} r={38} stroke={RD} strokeWidth={12} />
    <circle cx={45} cy={45} r={38} stroke={R} strokeWidth={6} />
    <L d="M43 49L63 29" w={12} c={R} o={RD} />
  </Icon>
);
const IcAng = () => (
  <Icon>
    <L d="M84 10L10 43L84 80" w={12} c={R} o={RD} cap="round" />
    <L d="M54 24Q66 44 54 66" w={12} c={R} o={RD} />
  </Icon>
);
const IcSnell = () => (
  <Icon>
    <L d="M6 6L46 44L57 82" w={13} c="#f1d80c" o="#3a3200" cap="round" />
    <L d="M6 43H84" w={11} c={R} o={RD} cap="round" />
  </Icon>
);
const SqFrame = ({ x, y, s, c, o }: { x: number; y: number; s: number; c: string; o: string }) => (
  <>
    <rect x={x} y={y} width={s} height={s} stroke={o} strokeWidth={12} strokeLinejoin="round" />
    <rect x={x} y={y} width={s} height={s} stroke={c} strokeWidth={7} />
  </>
);
const IcTogDrv = () => (
  <Icon>
    <SqFrame x={40} y={6} s={43} c={B} o={BD} />
    <SqFrame x={7} y={40} s={43} c="#f01010" o={RD} />
  </Icon>
);
const IcTogAct = () => (
  <Icon>
    <SqFrame x={30} y={6} s={53} c="#9a9c9a" o={K} />
    <rect x={7} y={30} width={54} height={54} fill="#f4f4f4" />
    <path d="M8 28V84H61V60" stroke={RD} strokeWidth={12} />
    <path d="M8 28V84H61V60" stroke="#e01616" strokeWidth={7} />
    <L d="M12 12L80 80" w={17} c="#3f6fb4" o={BD} cap="round" />
  </Icon>
);

/* ---------- toolbar parts ---------- */

const Cell = ({ children }: Kids) => <div className="flex w-[41px] shrink-0 items-center justify-center">{children}</div>;

const Caret = ({ dim }: { dim?: boolean }) => (
  <div className="flex w-3 shrink-0 justify-center">
    <svg width="8" height="4" viewBox="0 0 8 4">
      <path d="M0.5 0H7.5L4 4Z" fill={dim ? "#c8c8c8" : "#555"} />
    </svg>
  </div>
);

const Sep = () => (
  <div className="flex w-[7px] shrink-0 justify-center">
    <div className="h-[27px] w-px bg-[#cfcfcf]" />
  </div>
);

const Handle = () => (
  <div className="flex w-4 shrink-0 justify-end pr-[3px]">
    <svg width="6" height="18" viewBox="0 0 6 18">
      {[0, 3, 6, 9, 12, 15].map((y) => (
        <g key={y} fill="#bdbdbd">
          <rect x="0.5" y={y} width="1" height="1" />
          <rect x="3.5" y={y} width="1" height="1" />
        </g>
      ))}
    </svg>
  </div>
);

const Toolbar = ({ children, last }: Kids & { last?: boolean }) => (
  <div
    className={
      "flex shrink-0 items-center border-b border-[#b4b4b4] bg-gradient-to-b from-[#f9f9f9] to-[#ededed] " +
      (last ? "h-[46px]" : "h-[47px]")
    }
  >
    <div className="-ml-[3.5px] flex items-center">{children}</div>
  </div>
);

function WorkbenchBox() {
  return (
    <div className="mr-px flex h-6 w-[172px] items-center rounded-[3px] border border-[#a9a9a9] bg-gradient-to-b from-[#fefefe] to-[#eeeeee] pl-[5px]">
      <Icon size={17}>
        <Emblem x={4} y={4} s={1.22} c="#c4161c" w={7} />
      </Icon>
      <span className="ml-[3px] flex-1 pt-px">Sketcher</span>
      <div className="pr-1">
        <Caret />
      </div>
    </div>
  );
}

const row = (items: React.ReactNode[]) =>
  items.map((it, i) => {
    if (it === "|") return <Sep key={i} />;
    if (it === ":") return <Handle key={i} />;
    if (it === "v") return <Caret key={i} />;
    if (it === "d") return <Caret key={i} dim />;
    if (React.isValidElement(it) && it.type === WorkbenchBox) return <React.Fragment key={i}>{it}</React.Fragment>;
    return <Cell key={i}>{it}</Cell>;
  });

const menus = ["File", "Edit", "View", "Tools", "Macro", "Sketch", "Windows", "Help"];

function MenuLabel({ name }: { name: string }) {
  const k = name === "Sketch" ? 1 : 0;
  return (
    <span className="px-[7.35px]">
      {name.slice(0, k)}
      <span className="underline decoration-1 underline-offset-2">{name[k]}</span>
      {name.slice(k + 1)}
    </span>
  );
}

/* ---------- side panel ---------- */

function Check({ on }: { on?: boolean }) {
  return (
    <span className="flex size-[14px] shrink-0 items-center justify-center border border-[#b0b0b0] bg-white">
      {on && (
        <svg width="10" height="11" viewBox="0 0 10 11" fill="none">
          <path d="M1.2 5.2L4 9.2L8.6 1" stroke="#000" strokeWidth="2" />
        </svg>
      )}
    </span>
  );
}

function Combo({ text, dim }: { text: string; dim?: boolean }) {
  return (
    <div
      className={
        "flex h-[23px] w-[200px] items-center justify-between rounded-[3px] border bg-gradient-to-b pl-1 pr-[5px] " +
        (dim ? "border-[#c6c6c6] from-[#f5f5f5] to-[#eeeeee] text-[#bebebe]" : "border-[#a8a8a8] from-[#fdfdfd] to-[#ececec]")
      }
    >
      <span>{text}</span>
      <Caret dim={dim} />
    </div>
  );
}

function SectionHead({ title }: { title: string }) {
  return (
    <div className="flex h-[25px] shrink-0 items-center rounded-t-[4px] border border-white bg-gradient-to-r from-[#328ec8] to-[#66c2ff] pl-[6px] pr-[3px]">
      <svg width="15" height="16" viewBox="0 0 15 16">
        <rect x="1" y="1.5" width="12" height="13.5" fill="#eeeeea" stroke="#c9c9c0" strokeWidth="0.7" />
        <circle cx="11.5" cy="3.5" r="3" fill="#f6ef3a" />
      </svg>
      <span className="ml-[2px] flex-1 text-[12px] font-bold text-white">{title}</span>
      <svg width="15" height="15" viewBox="0 0 15 15" fill="none">
        <circle cx="7.5" cy="7.5" r="7" fill="#f2f6f9" />
        <path d="M4 7L7.5 3.7L11 7M4 11L7.5 7.7L11 11" stroke="#2d86c0" strokeWidth="1.5" />
      </svg>
    </div>
  );
}

const Tri = ({ down }: { down?: boolean }) => (
  <svg width="8" height="4" viewBox="0 0 8 4">
    <path d={down ? "M0 0H8L4 4Z" : "M0 4H8L4 0Z"} fill="#555" />
  </svg>
);

const ScrollBtn = ({ down }: { down?: boolean }) => (
  <div className={"flex h-[14px] shrink-0 items-center justify-center border-[#b8b8b8] bg-[#f8f8f8] pb-px " + (down ? "border-t" : "border-b")}>
    <Tri down={down} />
  </div>
);

const constraints: { n: string; on?: boolean; icon: React.ReactNode }[] = [
  { n: "Constraint73", icon: <IcCoin size={22} /> },
  { n: "Constraint74 (6 mm)", on: true, icon: <IcVDist size={22} /> },
  { n: "Constraint75", icon: <IcCoin size={22} /> },
  { n: "Constraint76", icon: <IcVert size={22} /> },
  { n: "Constraint77 (6 mm)", on: true, icon: <IcHDist size={22} /> },
  { n: "Constraint78", icon: <IcCoin size={22} /> },
  { n: "Constraint79", icon: <IcHorz size={22} /> },
];

const CloseX = () => (
  <svg width="11" height="11" viewBox="0 0 11 11" fill="none">
    <path d="M1.5 1.5L9.5 9.5M9.5 1.5L1.5 9.5" stroke="#7f817c" strokeWidth="3.6" />
    <path d="M1.5 1.5L9.5 9.5M9.5 1.5L1.5 9.5" stroke="#b0b2ad" strokeWidth="1.2" />
  </svg>
);

function SidePanel() {
  return (
    <div className="flex w-[477px] shrink-0 flex-col">
      <div className="flex h-[19px] items-center justify-between pl-1 pr-[7px]">
        <span>Combo View</span>
        <svg width="12" height="12" viewBox="0 0 12 12" fill="none" stroke="#666">
          <rect x="0.5" y="0.5" width="11" height="11" rx="2" />
          <rect x="2.8" y="4.7" width="4.5" height="4.5" rx="0.6" />
          <path d="M4.8 4.5V2.8H9.2V7.2H7.5" />
        </svg>
      </div>
      <div className="z-10 flex h-[27px] items-end">
        <div className="flex h-[25px] w-[61px] items-center justify-center rounded-t-[3px] border border-[#b2b2b2] bg-gradient-to-b from-[#efefef] to-[#e4e4e4] pr-px pt-[2px]">Model</div>
        <div className="-ml-px flex h-[27px] w-[79px] items-center rounded-t-[3px] border border-b-0 border-[#b2b2b2] bg-[#fafafa] pl-[11px]">
          <svg width="17" height="17" viewBox="0 0 17 17">
            <path d="M1 5L5 1L14 9L15.5 15L10 13.5Z" fill="#2b4d7e" stroke="#16273f" strokeWidth="0.8" />
            <path d="M14 10L15.6 15.2L11 13.5Z" fill="#e9e5d5" stroke="#333" strokeWidth="0.6" />
          </svg>
          <span className="ml-1 pt-px">Tasks</span>
        </div>
      </div>
      <div className="-mt-px flex min-h-0 flex-1">
        <div className="flex w-[471px] flex-col border border-[#b2b2b2] bg-[#f8f8f8] p-px">
          <div className="flex min-h-0 flex-1 overflow-hidden border border-[#b2b2b2]">
            <div className="flex flex-1 flex-col overflow-hidden bg-[linear-gradient(180deg,#cacaca_0px,#a4a4a4_250px,#9f9f9f_330px)] px-2 pt-[17px]">
              <button className="mx-auto flex h-6 w-20 shrink-0 items-center justify-center gap-1 rounded-[3px] border border-[#a8a8a8] bg-gradient-to-b from-[#fdfdfd] to-[#ececec] pl-px">
                <CloseX />
                <span>
                  <span className="underline decoration-1 underline-offset-2">C</span>lose
                </span>
              </button>
              <div className="mt-[17px] flex shrink-0 flex-col">
                <SectionHead title="Solver messages" />
                <div className="h-[119px] bg-[#eeeeee] px-[14px] pt-[10px]">
                  <div className="flex h-[21px] items-center text-[#008000]">Fully constrained sketch</div>
                  <div className="flex h-[21px] items-center text-[#008000]">Solved in 0 sec</div>
                  <div className="flex h-[27px] items-center gap-[5px]">
                    <Check on /> Auto remove redundants
                  </div>
                  <div className="flex h-[29px] items-center gap-[5px]">
                    <Check on /> Auto update
                    <button className="ml-auto h-[23px] w-[200px] rounded-[3px] border border-[#a8a8a8] bg-gradient-to-b from-[#fdfdfd] to-[#ececec]">Update</button>
                  </div>
                </div>
              </div>
              <div className="mt-[9px] flex shrink-0 flex-col">
                <SectionHead title="Edit controls" />
              </div>
              <div className="mt-[10px] flex shrink-0 flex-col">
                <SectionHead title="Constraints" />
                <div className="h-[297px] bg-[#eeeeee] px-[14px] pt-[11px]">
                  <div className="flex h-[27px] items-center justify-between">
                    Filter: <Combo text="All" />
                  </div>
                  <div className="flex h-7 items-center gap-[5px]">
                    <Check on /> Hide internal alignment
                  </div>
                  <div className="flex h-[27px] items-center gap-[5px]">
                    <Check /> Extended information
                  </div>
                  <div className="mt-[3px] flex h-[187px] border border-[#b2b2b2] bg-white">
                    <div className="flex-1 overflow-hidden">
                      {constraints.map((c) => (
                        <div key={c.n} className="flex h-[26px] items-center pl-[3px]">
                          <Check on={c.on} />
                          <span className="mx-[7px]">{c.icon}</span>
                          <span className="pt-px">{c.n}</span>
                        </div>
                      ))}
                      <div className="h-[26px] pl-6 pt-[1px]">
                        <div className="ml-[5px] h-1 w-[13px] bg-[#7a1010]" />
                      </div>
                    </div>
                    <div className="flex w-[15px] flex-col border-l border-[#b2b2b2] bg-[#e4e4e4]">
                      <ScrollBtn />
                      <div className="flex-1" />
                      <div className="mb-px h-[28px] border-y border-[#b2b2b2] bg-[#f8f8f8]" />
                      <ScrollBtn down />
                    </div>
                  </div>
                </div>
              </div>
              <div className="mt-2 flex shrink-0 flex-col">
                <SectionHead title="Elements" />
                <div className="h-[200px] bg-[#eeeeee] px-[14px] pt-[10px]">
                  <div className="flex h-[29px] items-center justify-between">
                    Type: <Combo text="Edge" dim />
                  </div>
                  <div className="flex h-[29px] items-center justify-between">
                    Mode: <Combo text="All" />
                  </div>
                  <div className="mt-[3px] flex h-[180px] border border-[#b2b2b2] bg-white">
                    <div className="flex-1 overflow-hidden pt-px">
                      {["1-Line", "2-Line", "3-Line"].map((n) => (
                        <div key={n} className="flex h-[26px] items-center gap-[7px] pl-1">
                          <IcLine c={G} size={22} />
                          {n}
                        </div>
                      ))}
                      <div className="flex h-[26px] items-center pl-1">
                        <IcLine c={G} size={22} />
                      </div>
                    </div>
                    <div className="flex w-[15px] flex-col border-l border-[#b2b2b2] bg-[#e4e4e4]">
                      <ScrollBtn />
                      <div className="h-9 border-b border-[#b2b2b2] bg-[#f8f8f8]" />
                    </div>
                  </div>
                </div>
              </div>
            </div>
            <div className="flex w-[14px] shrink-0 flex-col border-l border-[#b2b2b2] bg-[#e4e4e4]">
              <ScrollBtn />
              <div className="h-[558px] shrink-0 border-b border-[#b2b2b2] bg-gradient-to-r from-[#fdfdfd] to-[#f0f0f0]" />
              <div className="flex-1" />
              <ScrollBtn down />
            </div>
          </div>
        </div>
        <div className="flex flex-1 items-center justify-center pb-[42px]">
          <svg width="4" height="18" viewBox="0 0 4 18">
            {[0, 3, 6, 9, 12, 15].map((y) => (
              <rect key={y} x="1.5" y={y} width="1" height="1" fill="#b0b0b0" />
            ))}
          </svg>
        </div>
      </div>
    </div>
  );
}

/* ---------- 3D viewport ---------- */

const BG = "#455ba5";
const RED = "#ff2800";
const GREEN = "#00ff00";

function HexHole({ cx, cy, pts, holeX, holeY }: { cx: number; cy: number; pts: number[][]; holeX: number; holeY: number }) {
  return (
    <>
      <circle cx={cx} cy={cy} r={26.8} stroke="#8fa5ff" strokeWidth={3} fill="none" />
      <circle cx={holeX} cy={holeY} r={13.5} fill={BG} stroke="#cc3372" strokeWidth={3} />
      <polygon points={pts.map((p) => p.join(",")).join(" ")} fill="none" stroke={GREEN} strokeWidth={3} />
      {pts.map((p) => (
        <circle key={p.join()} cx={p[0]} cy={p[1]} r={7} fill={GREEN} />
      ))}
      <circle cx={cx} cy={cy} r={7} fill={GREEN} />
    </>
  );
}

const vHex = (x: number, y: number) => [
  [x - 13.5, y - 23],
  [x + 13.5, y - 23],
  [x + 27, y],
  [x + 13.5, y + 23],
  [x - 13.5, y + 23],
  [x - 27, y],
];
const hHex = (x: number, y: number) => [
  [x, y - 27],
  [x + 23.5, y - 13.5],
  [x + 23.5, y + 13.5],
  [x, y + 27],
  [x - 23.5, y + 13.5],
  [x - 23.5, y - 13.5],
];

const dimText = { fontFamily: "Liberation Sans", fontSize: 23.5, fill: "#cf2a20", stroke: "#b02c34", strokeWidth: 0.5 };

function Viewport() {
  return (
    <svg width="1443" height="775" viewBox="477 189 1443 775" fill="none" className="block shrink-0 tracking-normal">
      <rect x={477} y={189} width={1443} height={775} fill={BG} />
      <rect x={998} y={223} width={669} height={666} fill="#d6d6d6" />
      <rect x={1662} y={223} width={4} height={666} fill="#5e5e5e" />
      <rect x={998} y={223} width={669} height={666} stroke="#1a1a1a" strokeWidth={2} />
      <path d="M1000 223V889" stroke="#1a1a1a" strokeWidth={2} />
      <path
        d="M1167 323H1260.5L1287 350H1381L1407 323H1501L1566 389V482L1539 509V603L1566 629V723L1501 788H1407L1381 761H1287L1260.5 788H1167L1101 723V629L1128 603V509L1101 482V389Z"
        fill={BG}
        stroke="#1a1a1a"
        strokeWidth={1.7}
      />
      <path d="M804 189V964M1864 189V964" stroke="#3399ff" strokeWidth={2} />
      <HexHole cx={1334} cy={324} holeX={1334} holeY={323} pts={vHex(1334, 324)} />
      <HexHole cx={1334} cy={789} holeX={1334} holeY={788} pts={vHex(1334, 789)} />
      <HexHole cx={1102} cy={556} holeX={1101} holeY={556} pts={hHex(1102, 556)} />
      <HexHole cx={1567} cy={556} holeX={1566} holeY={556} pts={hHex(1567, 556)} />
      <circle cx={1334} cy={556} r={7} fill={GREEN} />
      <path d="M477 556H1920" stroke="#cc6666" strokeWidth={2} />
      <path d="M1000 556H1684" stroke="#3399ff" strokeWidth={2} strokeDasharray="6 5" />
      <path d="M1334 189V964" stroke="#80ff80" strokeWidth={2} />
      <path d="M1334 189V964" stroke="#3399ff" strokeWidth={2} strokeDasharray="6 4" />

      <g stroke={RED} strokeWidth={2}>
        <path d="M1244 300H1320M1245 347H1321M1270 265V292M1270 355V403" />
        <path d="M1078 569V648M1124 569V648M1043 622H1070M1133 622H1179" />
        <path d="M1543 569V607M1589 569V607M1498 581H1534M1598 581H1624" />
        <path d="M1347 765H1394M1347 812H1394M1368 723V757M1368 820V846" />
      </g>
      <g fill={RED}>
        <path d="M1264 289H1276L1270 300ZM1264 358H1276L1270 347Z" />
        <path d="M1067 616V628L1078 622ZM1136 616V628L1125 622Z" />
        <path d="M1532 575V587L1543 581ZM1601 575V587L1590 581Z" />
        <path d="M1362 754H1374L1368 765ZM1362 823H1374L1368 812Z" />
      </g>
      <text x={1185.5} y={629.5} {...dimText}>6 mm</text>
      <text x={1434.5} y={588.5} {...dimText}>6 mm</text>
      <text transform="translate(1278.5 467) rotate(-90)" {...dimText}>6 mm</text>
      <text transform="translate(1376.5 717) rotate(-90)" {...dimText}>6 mm</text>
      <text x={814.5} y={538} fontFamily="Liberation Serif" fontSize={55.7} fill="#3399ff">X_Axis</text>

      <g transform="translate(1760 185) scale(0.3333)">
        <g fill="#9ba6cf" opacity={0.95}>
          <path d="M263 33L297 68H228Z" />
          <path d="M263 428L297 393H228Z" />
          <path d="M65 231L99 197V265Z" />
          <path d="M459 231L423 194V267Z" />
          <path d="M204 54L210 76Q168 92 142 118L152 127L114 138L117 92L127 102Q160 70 204 54Z" />
          <path d="M318 54L314 76Q356 92 382 118L372 127L408 138L405 92L395 102Q364 70 318 54Z" />
        </g>
        <rect x={162} y={132} width={198} height={197} rx={20} fill="#99a6d0" />
        <rect x={186} y={155} width={150} height={150} fill="#c7cde3" />
        <g fill="#c7cde3">
          <circle cx={183} cy={153} r={16} />
          <circle cx={341} cy={153} r={16} />
          <circle cx={183} cy={309} r={16} />
          <circle cx={341} cy={309} r={16} />
        </g>
        <path d="M219 166H303L326 188V274L303 296H219L196 274V188Z" fill="#ced3e7" stroke="#a0aad2" strokeWidth={3} />
        <path d="M312 132V329" stroke="#8fb4f2" strokeWidth={6} />
        <path d="M189 197V300" stroke="#a8f0ac" strokeWidth={6} />
        <path d="M189 302H293" stroke="#f2b0b8" strokeWidth={6} />
        <circle cx={190} cy={301} r={5} fill="#00d000" />
        <path d="M185 305L170 320" stroke="#0000ff" strokeWidth={3} />
        <g fontFamily="Liberation Sans" fontSize={27} textAnchor="middle">
          <text x={164} y={343} fill="#0000ff">Z</text>
          <text x={206} y={159} fill="#64e864">Y</text>
          <text x={347} y={299} fill="#ff6a6a">X</text>
        </g>
        <text x={261} y={249} textAnchor="middle" fontFamily="Liberation Sans" fontWeight={700} fontSize={47} textLength={62} lengthAdjust="spacingAndGlyphs" fill="#000">TOP</text>
        <path d="M331 363L361 354L390 365V402L361 413L331 402Z" fill="#8996c4" stroke="#6f7cab" strokeWidth={3} />
        <path d="M331 365L361 371V413L331 402Z" fill="#7986b5" />
        <path d="M401 375H438L420 393Z" fill="#3d4774" />
      </g>

      <g transform="translate(1640 860) scale(0.3333)">
        <path d="M723 192V140" stroke="#207a28" strokeWidth={6} />
        <path d="M713 144L723 116L735 144Z" fill="#207a28" />
        <path d="M730 198H804" stroke="#8a1f24" strokeWidth={5} />
        <path d="M777 186L806 197L777 208Z" fill="#8a1f24" />
        <path d="M711 197L724 183L738 197L724 211Z" fill="#20207e" />
        <g fontFamily="Liberation Sans" fontSize={28} textAnchor="middle" fill="#000">
          <text x={740} y={117}>Y</text>
          <text x={740} y={198}>Z</text>
          <text x={821} y={198}>X</text>
        </g>
      </g>
    </svg>
  );
}

/* ---------- window ---------- */

const WinBtn = ({ close, children }: Kids & { close?: boolean }) => (
  <svg width="16" height="16" viewBox="0 0 16 16" fill="none">
    <circle cx="8" cy="8" r="7.7" fill={close ? "#ee6437" : "#7c7a72"} stroke={close ? "#8f3a1c" : "#33322d"} strokeWidth="0.6" />
    {children}
  </svg>
);

export default function App() {
  return (
    <div className="flex h-[1025px] w-[1920px] flex-col overflow-hidden bg-[#eeeeee] font-['DejaVu_Sans',sans-serif] text-[12px] leading-none tracking-[0.035px] text-black">
      <div className="grid h-7 shrink-0 grid-cols-3 items-center bg-gradient-to-b from-[#3a3934] to-[#4b4943]">
        <span />
        <span className="text-center font-['Noto_Sans',sans-serif] text-[14.5px] font-bold text-[#dfdbd2]">FreeCAD 0.19</span>
        <div className="flex justify-end gap-1 pr-[5px]">
          <WinBtn>
            <path d="M4 8.5H12" stroke="#3a3934" />
          </WinBtn>
          <WinBtn>
            <rect x="4.5" y="5.5" width="7" height="5" stroke="#3a3934" />
          </WinBtn>
          <WinBtn close>
            <path d="M5.2 5.2L10.8 10.8M10.8 5.2L5.2 10.8" stroke="#40322b" strokeWidth="1.3" />
          </WinBtn>
        </div>
      </div>
      <div className="flex h-5 shrink-0 items-center border-b border-[#d2d2d2] pl-[3px]">
        {menus.map((m) => (
          <MenuLabel key={m} name={m} />
        ))}
      </div>

      <Toolbar>
        {row([
          ":", <IcNew />, <IcOpen />, <IcSave />, <IcPrint />, "|", <IcCut />, <IcCopy />, <IcPaste />, "|", <IcUndo />, "v", <IcRedo />, "d", "|",
          <IcRefresh />, "|", <IcWhat />, ":", <WorkbenchBox />, ":", <IcFit />, <IcFitSel />, <IcStyle />, "v", <IcBBox />, "|", <IcBack />, <IcFwd />,
          <IcLink />, "v", "|", <IcSync />, "v", <IcIso />, "|", <IcCube face="front" />, <IcCube face="top" />, <IcCube face="right" />, "|",
          <IcCube face="rear" />, <IcCube face="bottom" />, <IcCube face="left" />, "|", <IcRuler />, ":", <IcPart />, <IcFolder />, <IcExport />, <IcExportAll />, "d",
        ])}
      </Toolbar>
      <Toolbar>
        {row([
          ":", <IcRecord />, <IcStopSq />, <IcNote />, <IcPlay />, ":", <IcNewSk />, <IcLeave />, <IcUp />, <IcViewSk />, <IcSection />, <IcMap />,
          <IcReorient />, <IcValidate />, <IcMerge />, <IcMirror />, <IcStop />, ":", <IcPoint />, <IcLine />, <IcArc />, "v", <IcCircle />, "v",
          <IcConic />, "v", <IcSpline />, "v", "|", <IcPoly />, <IcRect />, <IcHex />, "v", <IcSlot />, "|", <IcFillet />, "v", <IcTrim />, <IcExtend />,
          <IcExternal />, <IcCarbon />, <IcConstr />,
        ])}
      </Toolbar>
      <Toolbar last>
        {row([
          ":", <IcDof />, <IcConn />, <IcOrig />, <IcSelCon />, <IcSelElem />, <IcRedund />, <IcConflict />, <IcInternal />, <IcSymm />, <IcClone />, "v",
          <IcArray />, <IcDelAll />, ":", <IcBsCtl />, "v", <IcBsDeg />, <IcGrid sign="+" />, <IcGrid sign="-" />, <IcGrid sign="+" knot />, "v", ":",
          <IcVirt />, ":", <IcCoin />, <IcOnObj />, <IcVert />, <IcHorz />, <IcPar />, <IcPerp />, <IcTan />, <IcEq />, <IcSym />, <IcBlock />, "|",
          <IcLock />, <IcHDist />, <IcVDist />, <IcDist />, <IcRad />, "v", <IcAng />, <IcSnell />, "|", <IcTogDrv />, <IcTogAct />,
        ])}
      </Toolbar>

      <div className="mt-px flex h-[806px] shrink-0">
        <SidePanel />
        <div className="flex flex-1 flex-col">
          <Viewport />
          <div className="h-px bg-[#f8f8f8]" />
          <div className="flex flex-1">
            <div className="flex w-[166px] items-center rounded-b-[3px] border border-t-0 border-[#b2b2b2] bg-[#f8f8f8] pl-[11px] pt-px">
              <svg width="16" height="16" viewBox="0 0 16 16">
                <path d="M1 1H10V4.5H5V7H8.5V10H5V15H1Z" fill="#d8222b" stroke="#5a0c10" strokeWidth="0.8" />
                <circle cx="11" cy="10.5" r="3" fill="none" stroke="#4a78b8" strokeWidth="2" />
                <circle cx="11" cy="10.5" r="4.4" fill="none" stroke="#2f5c9c" strokeWidth="1.4" strokeDasharray="1.8 1.66" />
              </svg>
              <span className="ml-[4px]">NSPanelBox : 1*</span>
              <span className="ml-[9px]">
                <CloseX />
              </span>
            </div>
            <div className="flex-1 border-t border-[#b8b4bc]" />
          </div>
        </div>
      </div>

      <div className="flex flex-1 items-center justify-between pl-[2px] pt-[4px]">
        <span>Preselected: NSPanelBox.Body.Pocket001.Sketch002.Constraint71 (15.822622 mm,-4.292284 mm,1.509000 mm)</span>
        <div className="flex items-center whitespace-nowrap">
          <svg width="10" height="14" viewBox="0 0 10 14" fill="none" stroke="#555" strokeWidth="1.4">
            <rect x="0.8" y="0.8" width="8.4" height="12.4" rx="3" />
            <path d="M5 3.2V6" />
          </svg>
          <span className="ml-1 mr-[2px]">Revit</span>
          <Caret />
          <span className="ml-[9px]">186,19 mm x 100,00 mm</span>
        </div>
      </div>
    </div>
  );
}
